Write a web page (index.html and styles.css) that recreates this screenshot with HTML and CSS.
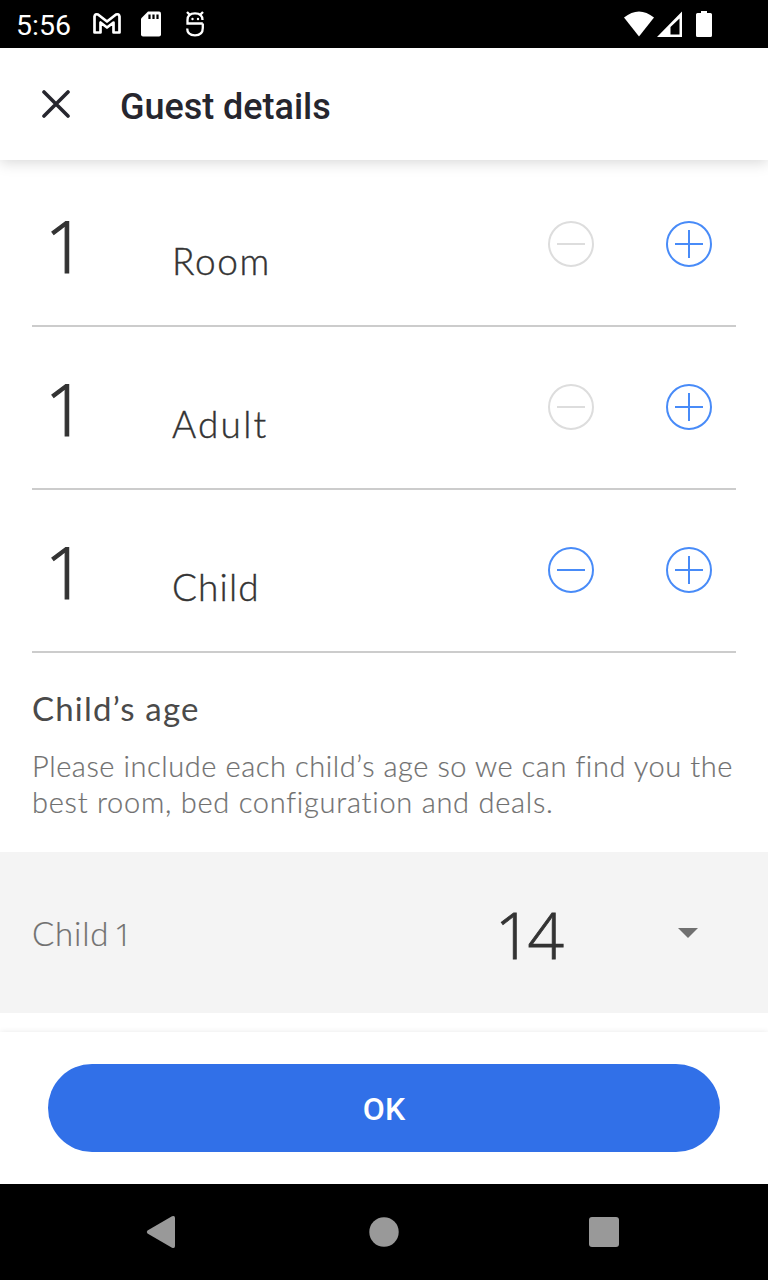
FILE: index.html
```
<!DOCTYPE html>
<html lang="en">
<head>
<meta charset="utf-8">
<title>Guest details</title>
<link rel="stylesheet" href="styles.css">
</head>
<body>
<div class="screen">
  <div class="status-bar">
    <span class="clock">5:56</span>
    <svg class="status-left" width="116" height="48" viewBox="0 0 116 48">
      <path d="M1.500 32.500V16.500Q2 13.500 5 14.500L14 21.500L23 14.500Q26 13.500 26.500 16.500V32.500H20.500V22.500L14 27.500L7.500 22.500V32.500Z" fill="none" stroke="#fff" stroke-width="2.700" stroke-linejoin="round"/>
      <path d="M55 11.500H66q2 0 2 2V34.500q0 2-2 2H50q-2 0-2-2V18.500Z" fill="#fff"/>
      <path d="M56.500 14.500v4.500M60.500 14.500v4.500M64.500 14.500v4.500" stroke="#000" stroke-width="2.200"/>
      <path d="M109.800 23.500H94.500V20Q94.500 13.300 102 13.300T109.500 20M109.800 23.500V28Q109.800 35.300 102 35.300T94.200 28.500" fill="none" stroke="#fff" stroke-width="2.300"/>
      <path d="M94 12l3 3M110 12l-3 3" stroke="#fff" stroke-width="2.400"/>
      <circle cx="99.500" cy="19" r="1.200" fill="#fff"/><circle cx="105" cy="19" r="1.200" fill="#fff"/>
    </svg>
    <svg class="status-right" width="90" height="48" viewBox="0 0 90 48">
      <path d="M0 17.500Q15 5.500 30 17.500L15 36.500Z" fill="#fff"/>
      <path d="M58 11.500V37H33ZM55.500 18.500L46.500 27V34.500H55.500Z" fill="#fff" fill-rule="evenodd"/>
      <path d="M77 11h6v2h3.500q1.500 0 1.500 1.500v21q0 1.500-1.500 1.500h-13q-1.500 0-1.500-1.500v-21q0-1.500 1.500-1.500H77Z" fill="#fff"/>
    </svg>
  </div>

  <header class="app-bar">
    <svg width="28" height="28" viewBox="0 0 28 28"><path d="M2 2L26 26M26 2L2 26" stroke="#26262e" stroke-width="3.600" stroke-linecap="round"/></svg>
    <h1 class="title">Guest details</h1>
  </header>

  <main class="content">
    <div class="row">
      <span class="count">1</span><span class="label room">Room</span>
      <div class="stepper">
        <svg class="btn off" viewBox="0 0 46 46"><circle cx="23" cy="23" r="22"/><path d="M9 23H37"/></svg>
        <svg class="btn" viewBox="0 0 46 46"><circle cx="23" cy="23" r="22"/><path d="M9 23H37M23 9V37"/></svg>
      </div>
    </div>
    <div class="row">
      <span class="count">1</span><span class="label adult">Adult</span>
      <div class="stepper">
        <svg class="btn off" viewBox="0 0 46 46"><circle cx="23" cy="23" r="22"/><path d="M9 23H37"/></svg>
        <svg class="btn" viewBox="0 0 46 46"><circle cx="23" cy="23" r="22"/><path d="M9 23H37M23 9V37"/></svg>
      </div>
    </div>
    <div class="row">
      <span class="count">1</span><span class="label child">Child</span>
      <div class="stepper">
        <svg class="btn" viewBox="0 0 46 46"><circle cx="23" cy="23" r="22"/><path d="M9 23H37"/></svg>
        <svg class="btn" viewBox="0 0 46 46"><circle cx="23" cy="23" r="22"/><path d="M9 23H37M23 9V37"/></svg>
      </div>
    </div>
    <section class="ages">
      <h2 class="ages-title">Child’s age</h2>
      <p class="ages-text"><span class="line-a">Please include each child’s age so we can find you the</span><br><span class="line-b">best room, bed configuration and deals.</span></p>
    </section>
    <div class="age-row">
      <span class="age-label">Child <span class="digit">1</span></span>
      <span class="age-value">14</span>
      <svg class="caret" width="20" height="10" viewBox="0 0 20 10"><path d="M0 0H20L10 10Z" fill="#707070"/></svg>
    </div>
  </main>

  <footer class="footer"><button class="ok">OK</button></footer>

  <nav class="nav-bar">
    <svg width="768" height="96" viewBox="0 0 768 96" fill="#999">
      <path d="M147.500 46.500L172 32.300q3-1.300 3 1.700V62q0 3-3 1.700L147.500 49.500q-1.500-1.500 0-3Z"/>
      <circle cx="384" cy="48" r="14.700"/>
      <rect x="589" y="33" width="30" height="30" rx="3"/>
    </svg>
  </nav>
</div>
</body>
</html>
```
FILE: styles.css
```
* { box-sizing: border-box; }
body { margin: 0; background: #fff; }
h1, h2, p { margin: 0; }
svg { display: block; flex: none; }
.screen { width: 768px; height: 1280px; display: flex; flex-direction: column; overflow: hidden; font-family: Lato, sans-serif; font-weight: 300; color: #333; }
.status-bar { height: 48px; flex: none; background: #000; color: #fff; display: flex; padding: 0 54px 0 16px; }
.clock { width: 77px; font: 400 28.5px/51px Roboto, sans-serif; }
.status-right { margin-left: auto; }
.app-bar { height: 112px; flex: none; display: flex; align-items: center; padding-left: 42px; gap: 50px; background: #fff; box-shadow: 0 2px 14px rgba(0,0,0,.17); z-index: 1; }
.title { font: 500 36px/42px Roboto, sans-serif; letter-spacing: -.03px; color: #26262e; padding-top: 6px; }
.content { flex: 1; padding-top: 4px; }
.row { height: 163px; margin: 0 32px; padding: 46px 24px 0 13px; border-bottom: 2px solid #ccc; display: flex; align-items: baseline; }
.count { width: 127px; font: 300 71px/72px "Open Sans", sans-serif; -webkit-text-stroke: 1.2px #333; }
.label { position: relative; top: 2px; font-size: 37px; line-height: 44px; -webkit-text-stroke: .4px #333; }
.room { letter-spacing: 1.6px; }
.adult { letter-spacing: 2.2px; }
.child { letter-spacing: 1.1px; }
.stepper { display: flex; gap: 72px; margin: 11px 0 0 auto; align-self: flex-start; }
.btn { width: 46px; height: 46px; fill: none; stroke: #488bf8; stroke-width: 2; }
.off { stroke: #ddd; }
.ages { height: 199px; padding: 35px 32px 0; }
.ages-title { font-size: 33px; line-height: 40px; font-weight: 400; color: #4a4a4a; letter-spacing: 1.2px; }
.ages-text { font-size: 29px; line-height: 36px; color: #707070; margin-top: 20px; white-space: nowrap; -webkit-text-stroke: .2px #707070; }
.line-a { letter-spacing: .57px; }
.line-b { letter-spacing: .74px; }
.age-row { height: 161px; background: #f4f4f4; display: flex; align-items: center; padding: 0 70px 0 32px; }
.age-label { width: 464px; font-size: 33px; color: #707070; letter-spacing: .8px; word-spacing: -5px; padding-top: 1px; -webkit-text-stroke: .2px #707070; }
.digit { font-family: "Open Sans", sans-serif; font-size: 32px; }
.age-value { font: 300 64px/72px "Open Sans", sans-serif; letter-spacing: -4px; padding-top: 4px; margin-left: -1px; -webkit-text-stroke: .8px #333; }
.caret { margin-left: auto; }
.footer { height: 152px; flex: none; background: #fff; padding: 32px 48px; box-shadow: 0 0 6px rgba(0,0,0,.09); z-index: 1; }
.ok { display: block; width: 672px; height: 88px; border: 0; border-radius: 44px; background: #3170e8; color: #fff; font: 500 32px/40px Roboto, sans-serif; padding: 2px 0 0; }
.nav-bar { height: 96px; flex: none; background: #000; z-index: 2; }
```
